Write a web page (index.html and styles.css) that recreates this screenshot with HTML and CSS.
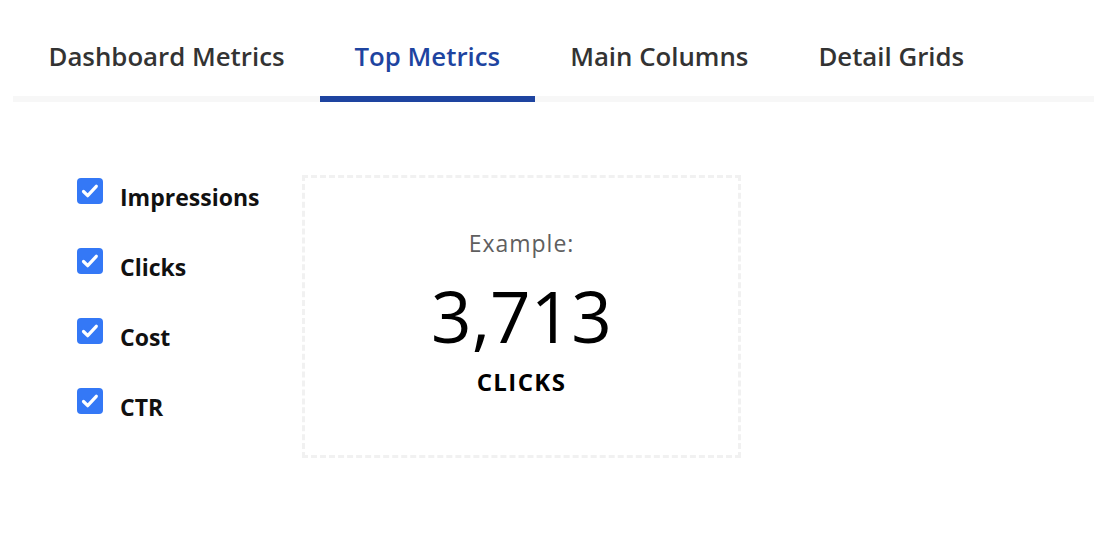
FILE: index.html
```html
<!DOCTYPE html>
<html lang="en">
<head>
<meta charset="utf-8">
<title>Top Metrics</title>
<link rel="stylesheet" href="styles.css">
</head>
<body>
<nav class="tabs">
  <div class="tab">Dashboard Metrics</div>
  <div class="tab active">Top Metrics</div>
  <div class="tab">Main Columns</div>
  <div class="tab">Detail Grids</div>
</nav>
<main class="content">
  <ul class="metric-list">
    <li class="metric"><span class="check"><svg viewBox="0 0 26 26" width="26" height="26"><rect width="26" height="26" rx="4" fill="#3478f6"/><path d="M6.5 13.5l4.2 4.2 8.6-9.4" fill="none" stroke="#fff" stroke-width="3.2" stroke-linecap="round" stroke-linejoin="round"/></svg></span><span class="label">Impressions</span></li>
    <li class="metric"><span class="check"><svg viewBox="0 0 26 26" width="26" height="26"><rect width="26" height="26" rx="4" fill="#3478f6"/><path d="M6.5 13.5l4.2 4.2 8.6-9.4" fill="none" stroke="#fff" stroke-width="3.2" stroke-linecap="round" stroke-linejoin="round"/></svg></span><span class="label">Clicks</span></li>
    <li class="metric"><span class="check"><svg viewBox="0 0 26 26" width="26" height="26"><rect width="26" height="26" rx="4" fill="#3478f6"/><path d="M6.5 13.5l4.2 4.2 8.6-9.4" fill="none" stroke="#fff" stroke-width="3.2" stroke-linecap="round" stroke-linejoin="round"/></svg></span><span class="label">Cost</span></li>
    <li class="metric"><span class="check"><svg viewBox="0 0 26 26" width="26" height="26"><rect width="26" height="26" rx="4" fill="#3478f6"/><path d="M6.5 13.5l4.2 4.2 8.6-9.4" fill="none" stroke="#fff" stroke-width="3.2" stroke-linecap="round" stroke-linejoin="round"/></svg></span><span class="label">CTR</span></li>
  </ul>
  <section class="example">
    <div class="example-title">Example:</div>
    <div class="example-value">3,713</div>
    <div class="example-unit">CLICKS</div>
  </section>
</main>
</body>
</html>
```
FILE: styles.css
```css
html, body {
  margin: 0;
  padding: 0;
  background: #fff;
}
body {
  font-family: "Open Sans", "Liberation Sans", sans-serif;
  color: #333;
}
.tabs {
  display: flex;
  margin-left: 13px;
  border-bottom: 6px solid #f7f7f7;
}
.tab {
  padding: 38px 35px 22px;
  line-height: 36px;
  font-size: 25.8px;
  font-weight: 600;
  color: #333;
  border-bottom: 6px solid transparent;
  margin-bottom: -6px;
}
.tab:first-child {
  padding-left: 35.5px;
}
.tab.active {
  color: #1e44a0;
  border-bottom-color: #1e44a0;
}
.content {
  display: flex;
  align-items: flex-start;
  padding: 73px 0 0 77px;
}
.metric-list {
  list-style: none;
  margin: 0;
  padding: 3px 0 0;
  width: 225px;
  display: flex;
  flex-direction: column;
  gap: 44px;
}
.metric {
  display: flex;
  align-items: flex-start;
  gap: 17px;
  height: 26px;
}
.check {
  display: block;
  width: 26px;
  height: 26px;
}
.check svg {
  display: block;
}
.label {
  font-size: 23px;
  font-weight: 700;
  color: #111;
  line-height: 30px;
  margin-top: 4px;
}
.example {
  width: 433px;
  border: 3px dashed #f1f1f1;
  display: flex;
  flex-direction: column;
  align-items: center;
  padding-top: 50px;
  box-sizing: content-box;
  height: 227px;
}
.example-title {
  font-size: 23px;
  font-weight: 400;
  letter-spacing: 1px;
  line-height: 30px;
  color: #5f5f5f;
}
.example-value {
  font-size: 71px;
  font-weight: 400;
  line-height: 80px;
  margin-top: 18px;
  color: #000;
}
.example-unit {
  font-size: 24px;
  font-weight: 700;
  letter-spacing: 1.4px;
  line-height: 30px;
  margin-top: 11px;
  color: #000;
}
```
